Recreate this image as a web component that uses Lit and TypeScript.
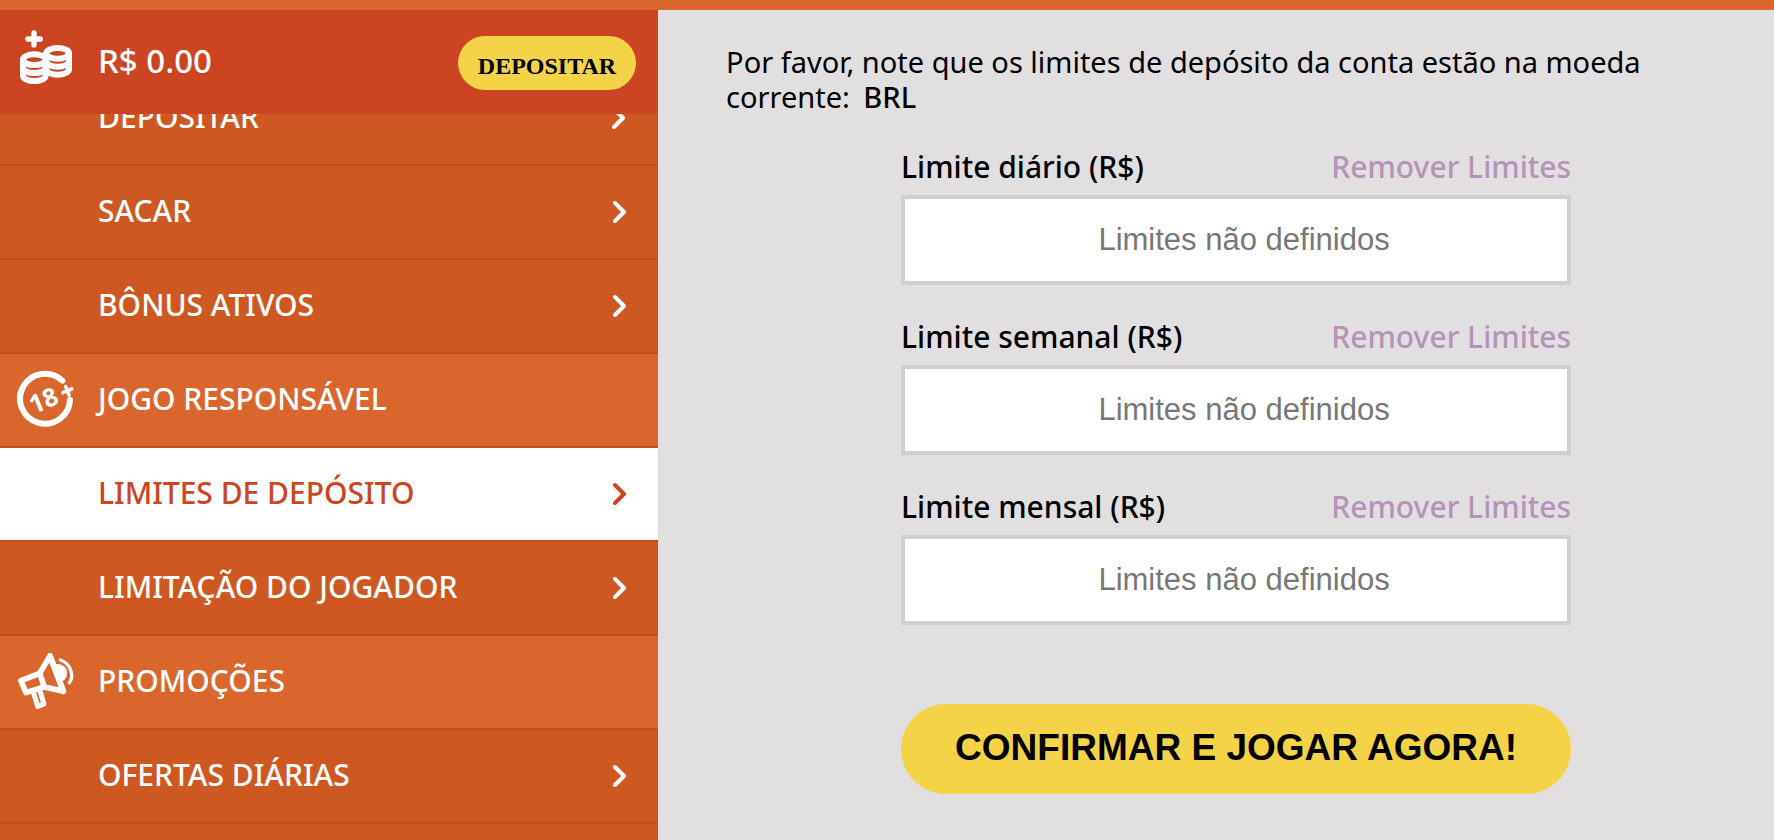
import { LitElement, html, svg, css, nothing } from "lit";
import { customElement, state } from "lit/decorators.js";
import { classMap } from "lit/directives/class-map.js";

interface Entry {
  label: string;
  icon?: "adult" | "promo";
}

interface Limit {
  id: string;
  label: string;
}

const ENTRIES: Entry[] = [
  { label: "DEPOSITAR" },
  { label: "SACAR" },
  { label: "BÔNUS ATIVOS" },
  { label: "JOGO RESPONSÁVEL", icon: "adult" },
  { label: "LIMITES DE DEPÓSITO" },
  { label: "LIMITAÇÃO DO JOGADOR" },
  { label: "PROMOÇÕES", icon: "promo" },
  { label: "OFERTAS DIÁRIAS" },
];

const LIMITS: Limit[] = [
  { id: "daily", label: "Limite diário (R$)" },
  { id: "weekly", label: "Limite semanal (R$)" },
  { id: "monthly", label: "Limite mensal (R$)" },
];

const coinStack = (x: number, y: number) => svg`
  <ellipse cx=${x} cy=${y} rx="34" ry="16" />
  <path d="M${x - 34} ${y}v24a34 16 0 0 0 68 0v-24" />
  <path d="M${x - 34} ${y + 24}v24a34 16 0 0 0 68 0v-24" />`;

const coinsIcon = html`
  <svg class="icon" viewBox="6 18 180 192" aria-hidden="true">
    <g fill="none" stroke="currentColor" stroke-width="18" stroke-linecap="round">
      ${coinStack(131, 88)} ${coinStack(61, 107)}
      <path stroke-width="16" d="M42 45H79M60 27V63" />
    </g>
  </svg>`;

const adultIcon = html`
  <svg class="icon" viewBox="6 6 180 192" aria-hidden="true">
    <g fill="none" stroke="currentColor" stroke-linecap="round">
      <path stroke-width="18" d="M145 44A75 75 0 1 0 168 102" />
      <path stroke-width="11" d="M147 80L173 69M155 62L165 87" />
    </g>
    <text class="badge-text" x="0" y="28" text-anchor="middle" transform="translate(88 102) rotate(-23)">18</text>
  </svg>`;

const promoIcon = html`
  <svg class="icon" viewBox="6 6 180 192" aria-hidden="true">
    <g fill="none" stroke="currentColor" stroke-linecap="round" stroke-linejoin="round">
      <path stroke-width="17" d="M21 98L77 76L91 117L36 134Z" />
      <path stroke-width="17" d="M77 76L108 24L148 130L91 117" />
      <path stroke-width="17" d="M108 24L148 130" />
      <path stroke-width="15" d="M60 138L71 175L90 168L79 132" />
      <path stroke-width="10" d="M139 36Q164 44 171 70Q177 90 166 104" />
    </g>
    <path fill="currentColor" d="M121 50A26 26 0 0 1 142 102Z" />
  </svg>`;

const chevron = html`
  <svg class="chevron" viewBox="0 0 14 24" aria-hidden="true">
    <path d="M2 3L11 12L2 21" fill="none" stroke="currentColor" stroke-width="4" stroke-linecap="round" stroke-linejoin="round" />
  </svg>`;

@customElement("app-root")
export class AppRoot extends LitElement {
  @state() private active = "LIMITES DE DEPÓSITO";

  static styles = css`
    :host {
      display: block;
      font-family: "Noto Sans", sans-serif;
      color: #000;
    }
    * {
      box-sizing: border-box;
    }
    .page {
      height: 100vh;
      display: grid;
      grid-template-columns: 23fr 39fr;
      grid-template-rows: minmax(0, 1fr);
      border-top: 10px solid #d9672d;
      background: #e1dfe0;
    }
    .side {
      display: flex;
      flex-direction: column;
      color: #fff;
      background: #cd5822;
      font-weight: 500;
      min-width: 0;
    }
    .balance {
      flex: none;
      display: flex;
      align-items: center;
      gap: 22px;
      height: 104px;
      padding: 0 22px 0 16px;
      background: #cc4522;
    }
    .amount {
      flex: 1;
      padding-bottom: 2px;
      font-size: 33px;
      line-height: 44px;
    }
    .deposit {
      height: 54px;
      margin-top: 2px;
      padding: 6px 20px 0;
      border: 0;
      border-radius: 27px;
      background: #f4d348;
      color: #000;
      font: bold 24px "Liberation Serif", serif;
    }
    .icon {
      flex: none;
      width: 60px;
      height: 64px;
    }
    .badge-text {
      font: bold 76px "Noto Sans", sans-serif;
      fill: currentColor;
    }
    .menu {
      flex: 1;
      min-height: 0;
      overflow-y: auto;
      scrollbar-width: none;
      margin: 0;
      padding: 0;
      list-style: none;
    }
    .entry {
      height: 94px;
      border-bottom: 2px solid #c84a20;
    }
    .entry:first-child {
      border-right: 1px solid #c84a20;
    }
    .row {
      display: flex;
      align-items: center;
      gap: 22px;
      height: 100%;
      padding: 0 31px 0 98px;
      font-size: 30px;
      line-height: 42px;
      white-space: nowrap;
      color: inherit;
      text-decoration: none;
    }
    .row.group {
      padding-left: 16px;
      background: #d9672d;
    }
    .row.active {
      background: #fff;
      color: #cc4522;
    }
    .name {
      flex: 1;
      margin: 0;
      padding-bottom: 2px;
      font: inherit;
    }
    .chevron {
      flex: none;
      width: 14px;
      height: 24px;
    }
    .main {
      min-width: 0;
      overflow-y: auto;
      padding: 34px 28px 34px 68px;
    }
    .note {
      margin: 0 0 33px;
      font-size: 29px;
      line-height: 35px;
    }
    .currency {
      font-weight: 500;
      margin-left: 6px;
    }
    .form {
      display: flex;
      flex-direction: column;
      gap: 31px;
      max-width: 670px;
      margin: 0 auto;
    }
    .field {
      display: grid;
      grid-template-columns: 1fr auto;
      row-gap: 8px;
      padding-bottom: 1px;
      font-size: 30px;
      font-weight: 500;
      line-height: 40px;
    }
    .remove {
      color: #b593b8;
      text-decoration: none;
    }
    .value {
      grid-column: 1 / -1;
      width: 100%;
      height: 90px;
      padding: 0 0 0 16px;
      border: 4px solid #d0cfd0;
      border-radius: 0;
      background: #fff;
      font: 31px "Liberation Sans", sans-serif;
      text-align: center;
    }
    .value::placeholder {
      color: #777;
      opacity: 1;
    }
    .confirm {
      height: 90px;
      margin-top: 47px;
      padding: 0 0 2px;
      border: 0;
      border-radius: 45px;
      background: #f4d348;
      color: #000;
      font: bold 37px "Liberation Sans", sans-serif;
    }
  `;

  firstUpdated() {
    const menu = this.renderRoot.querySelector(".menu");
    if (menu) menu.scrollTop = 42;
  }

  private renderEntry({ label, icon }: Entry) {
    if (icon) {
      return html`<li class="entry">
        <div class="row group">
          ${icon === "adult" ? adultIcon : promoIcon}
          <h2 class="name">${label}</h2>
        </div>
      </li>`;
    }
    const active = label === this.active;
    return html`<li class="entry">
      <a
        class=${classMap({ row: true, active })}
        href="#"
        aria-current=${active ? "page" : nothing}
        @click=${(e: Event) => {
          e.preventDefault();
          this.active = label;
        }}
        ><span class="name">${label}</span>${chevron}</a
      >
    </li>`;
  }

  private clear(e: Event, id: string) {
    e.preventDefault();
    const input = this.renderRoot.querySelector<HTMLInputElement>(`#${id}`);
    if (input) input.value = "";
  }

  render() {
    return html`
      <div class="page">
        <nav class="side">
          <div class="balance">
            ${coinsIcon}
            <span class="amount">R$ 0.00</span>
            <button class="deposit" type="button">DEPOSITAR</button>
          </div>
          <ul class="menu">
            ${ENTRIES.map((entry) => this.renderEntry(entry))}
            <li class="entry" aria-hidden="true"></li>
          </ul>
        </nav>
        <main class="main">
          <p class="note">
            Por favor, note que os limites de depósito da conta estão na moeda corrente:
            <span class="currency">BRL</span>
          </p>
          <form class="form" @submit=${(e: Event) => e.preventDefault()}>
            ${LIMITS.map(
              ({ id, label }) => html`<div class="field">
                <label for=${id}>${label}</label>
                <a class="remove" href="#" @click=${(e: Event) => this.clear(e, id)}>Remover Limites</a>
                <input class="value" id=${id} type="text" inputmode="decimal" placeholder="Limites não definidos" />
              </div>`
            )}
            <button class="confirm" type="submit">CONFIRMAR E JOGAR AGORA!</button>
          </form>
        </main>
      </div>
    `;
  }
}
